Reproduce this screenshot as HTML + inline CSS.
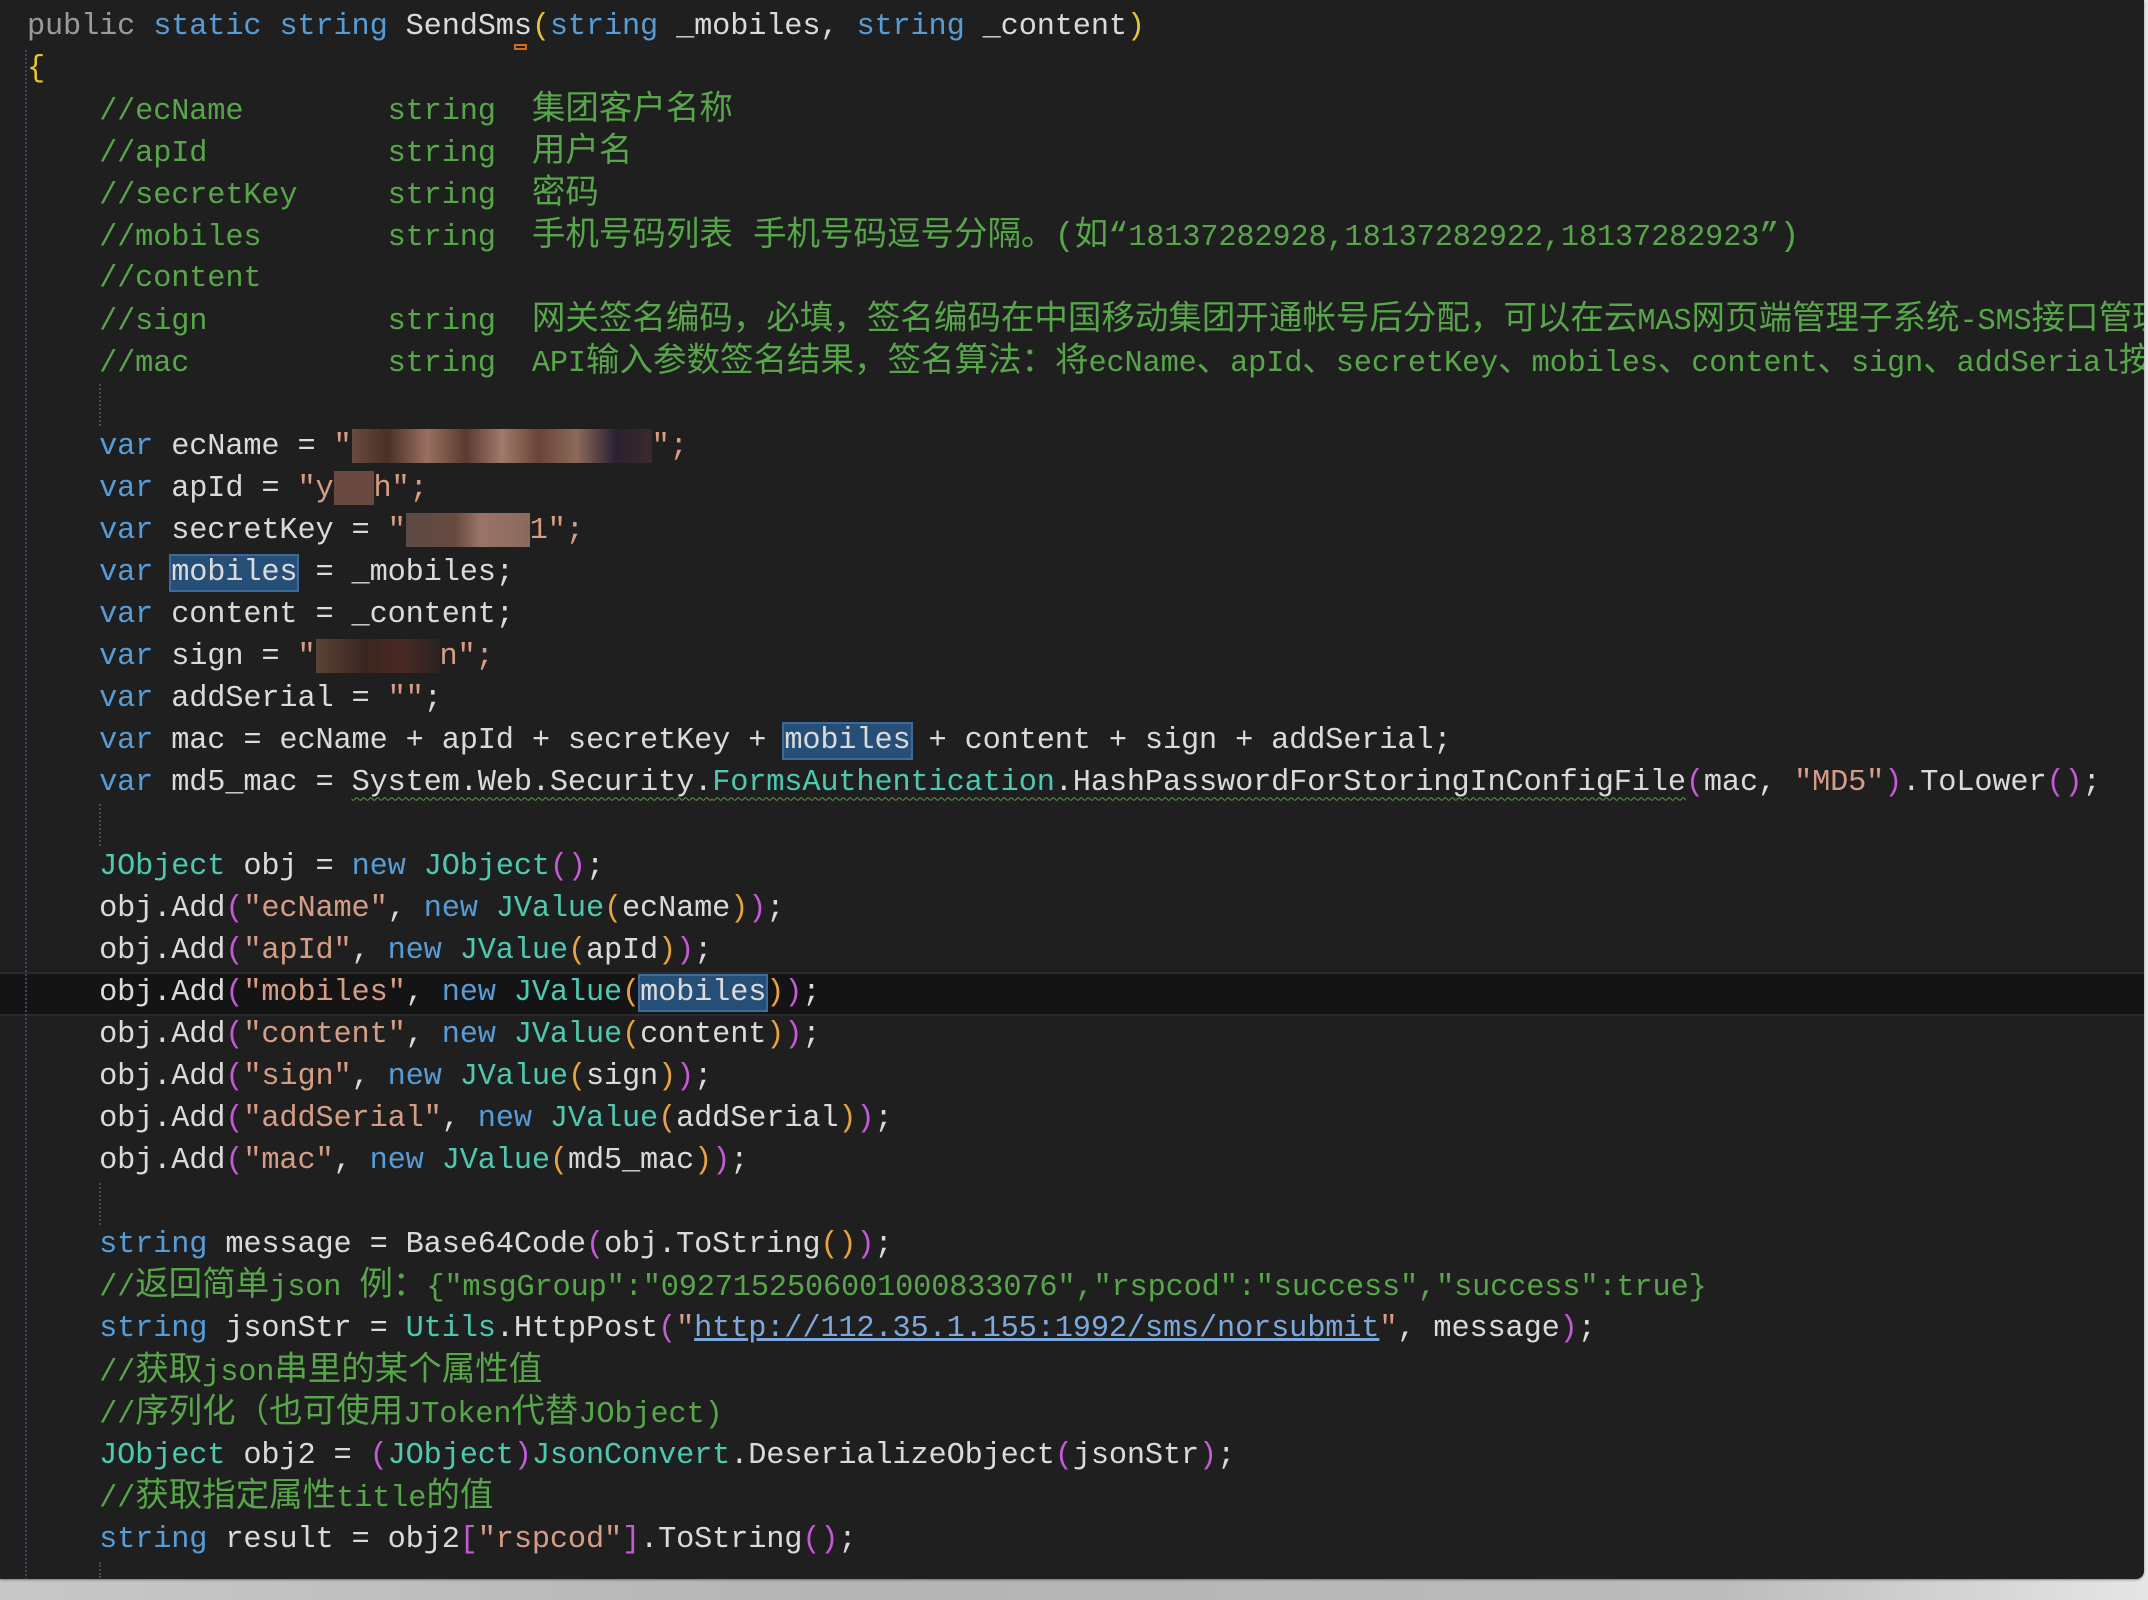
<!DOCTYPE html>
<html><head><meta charset="utf-8">
<style>
html,body{margin:0;padding:0;}
body{width:2148px;height:1600px;overflow:hidden;background:linear-gradient(90deg,#c8c8c8 0%,#b4b4b4 40%,#bcbcbc 80%,#e6e6e6 100%);position:relative;}
#panel{position:absolute;left:0;top:0;width:2144px;height:1579px;background:#1f1f1f;border-bottom-right-radius:8px;overflow:hidden;box-shadow:0 1px 2px rgba(0,0,0,.4);}
#code{position:absolute;left:27px;top:6px;font-family:"Liberation Mono","Noto Sans CJK SC",monospace;font-size:30.3px;letter-spacing:-0.15px;color:#dadada;}
.l{height:42.03px;line-height:42.03px;white-space:pre;}
.k{color:#569cd6}.c{color:#57a64a}.s{color:#d69d85}.t{color:#4ec9b0}.g{color:#9a9a9a}
.p{color:#c45ad6}.o{color:#e8a33d}.y{color:#e6c532}
.z{font-size:33.5px;letter-spacing:0px}
.sel{background:#264f78;outline:2px solid #3d6a9a;}
.u{color:#7ea8dc;text-decoration:underline;}
.w{text-decoration:underline wavy #5f9c4a;text-decoration-thickness:1px;text-underline-offset:6px}
.b{display:inline-block;height:34px;vertical-align:middle;}
#cur{position:absolute;left:0;top:972px;width:2144px;height:40px;background:#141414;border-top:2px solid #2b2b2b;border-bottom:2px solid #2b2b2b;}
.gd{position:absolute;width:0;border-left:2px dotted #3a4466;}
.gd2{position:absolute;width:0;border-left:2px dotted #4a4a4a;height:42px;left:99px;}
</style></head><body>
<div id="panel">
<div id="cur"></div>
<div class="gd" style="left:25px;top:50px;height:1530px;"></div>
<div class="gd2" style="top:384px"></div>
<div class="gd2" style="top:804px"></div>
<div class="gd2" style="top:1183px"></div>
<div class="gd2" style="top:1562px;height:16px"></div>
<div style="position:absolute;left:514px;top:44px;width:13px;height:6px;border:2px solid #d86a1e;box-sizing:border-box"></div>
<div id="code">
<div class="l"><span class="g">public</span> <span class="k">static</span> <span class="k">string</span> SendSms<span class="y">(</span><span class="k">string</span> _mobiles, <span class="k">string</span> _content<span class="y">)</span></div>
<div class="l"><span class="y">{</span></div>
<div class="l c">    //ecName        string  <span class="z">集团客户名称</span></div>
<div class="l c">    //apId          string  <span class="z">用户名</span></div>
<div class="l c">    //secretKey     string  <span class="z">密码</span></div>
<div class="l c">    //mobiles       string  <span class="z">手机号码列表 手机号码逗号分隔。(如“</span>18137282928,18137282922,18137282923<span class="z">”)</span></div>
<div class="l c">    //content</div>
<div class="l c">    //sign          string  <span class="z">网关签名编码，必填，签名编码在中国移动集团开通帐号后分配，可以在云</span>MAS<span class="z">网页端管理子系统</span>-SMS<span class="z">接口管理</span></div>
<div class="l c">    //mac           string  API<span class="z">输入参数签名结果，签名算法：将</span>ecName<span class="z">、</span>apId<span class="z">、</span>secretKey<span class="z">、</span>mobiles<span class="z">、</span>content<span class="z">、</span>sign<span class="z">、</span>addSerial<span class="z">按照顺序</span></div>
<div class="l"> </div>
<div class="l">    <span class="k">var</span> ecName = <span class="s">"</span><span class="b" style="width:300px;background:linear-gradient(90deg,#6a4a40 0%,#4a3028 12%,#9a7060 25%,#5a3a30 38%,#a07a6a 50%,#6a4438 62%,#8a6a5a 75%,#2a2030 88%,#3a2a2a 100%)"></span><span class="s">";</span></div>
<div class="l">    <span class="k">var</span> apId = <span class="s">"y</span><span class="b" style="width:40px;background:#6a4a40"></span><span class="s">h";</span></div>
<div class="l">    <span class="k">var</span> secretKey = <span class="s">"</span><span class="b" style="width:124px;background:linear-gradient(90deg,#5a4a44,#6a4a40 40%,#9a7468 60%,#8a6a5e)"></span><span class="s">1";</span></div>
<div class="l">    <span class="k">var</span> <span class="sel">mobiles</span> = _mobiles;</div>
<div class="l">    <span class="k">var</span> content = _content;</div>
<div class="l">    <span class="k">var</span> sign = <span class="s">"</span><span class="b" style="width:124px;background:linear-gradient(90deg,#5a4436,#3a2620 40%,#4a2a22 70%,#2a2222)"></span><span class="s">n";</span></div>
<div class="l">    <span class="k">var</span> addSerial = <span class="s">""</span>;</div>
<div class="l">    <span class="k">var</span> mac = ecName + apId + secretKey + <span class="sel">mobiles</span> + content + sign + addSerial;</div>
<div class="l">    <span class="k">var</span> md5_mac = <span class="w">System.Web.Security.<span class="t">FormsAuthentication</span>.HashPasswordForStoringInConfigFile</span><span class="p">(</span>mac, <span class="s">"MD5"</span><span class="p">)</span>.ToLower<span class="p">()</span>;</div>
<div class="l"> </div>
<div class="l">    <span class="t">JObject</span> obj = <span class="k">new</span> <span class="t">JObject</span><span class="p">()</span>;</div>
<div class="l">    obj.Add<span class="p">(</span><span class="s">"ecName"</span>, <span class="k">new</span> <span class="t">JValue</span><span class="o">(</span>ecName<span class="o">)</span><span class="p">)</span>;</div>
<div class="l">    obj.Add<span class="p">(</span><span class="s">"apId"</span>, <span class="k">new</span> <span class="t">JValue</span><span class="o">(</span>apId<span class="o">)</span><span class="p">)</span>;</div>
<div class="l">    obj.Add<span class="p">(</span><span class="s">"mobiles"</span>, <span class="k">new</span> <span class="t">JValue</span><span class="o">(</span><span class="sel">mobiles</span><span class="o">)</span><span class="p">)</span>;</div>
<div class="l">    obj.Add<span class="p">(</span><span class="s">"content"</span>, <span class="k">new</span> <span class="t">JValue</span><span class="o">(</span>content<span class="o">)</span><span class="p">)</span>;</div>
<div class="l">    obj.Add<span class="p">(</span><span class="s">"sign"</span>, <span class="k">new</span> <span class="t">JValue</span><span class="o">(</span>sign<span class="o">)</span><span class="p">)</span>;</div>
<div class="l">    obj.Add<span class="p">(</span><span class="s">"addSerial"</span>, <span class="k">new</span> <span class="t">JValue</span><span class="o">(</span>addSerial<span class="o">)</span><span class="p">)</span>;</div>
<div class="l">    obj.Add<span class="p">(</span><span class="s">"mac"</span>, <span class="k">new</span> <span class="t">JValue</span><span class="o">(</span>md5_mac<span class="o">)</span><span class="p">)</span>;</div>
<div class="l"> </div>
<div class="l">    <span class="k">string</span> message = Base64Code<span class="p">(</span>obj.ToString<span class="o">()</span><span class="p">)</span>;</div>
<div class="l c">    //<span class="z">返回简单</span>json <span class="z">例：</span>{"msgGroup":"0927152506001000833076","rspcod":"success","success":true}</div>
<div class="l">    <span class="k">string</span> jsonStr = <span class="t">Utils</span>.HttpPost<span class="p">(</span><span class="s">"</span><span class="u">http://112.35.1.155:1992/sms/norsubmit</span><span class="s">"</span>, message<span class="p">)</span>;</div>
<div class="l c">    //<span class="z">获取</span>json<span class="z">串里的某个属性值</span></div>
<div class="l c">    //<span class="z">序列化（也可使用</span>JToken<span class="z">代替</span>JObject)</div>
<div class="l">    <span class="t">JObject</span> obj2 = <span class="p">(</span><span class="t">JObject</span><span class="p">)</span><span class="t">JsonConvert</span>.DeserializeObject<span class="p">(</span>jsonStr<span class="p">)</span>;</div>
<div class="l c">    //<span class="z">获取指定属性</span>title<span class="z">的值</span></div>
<div class="l">    <span class="k">string</span> result = obj2<span class="p">[</span><span class="s">"rspcod"</span><span class="p">]</span>.ToString<span class="p">()</span>;</div>
</div>
</div>
</body></html>
